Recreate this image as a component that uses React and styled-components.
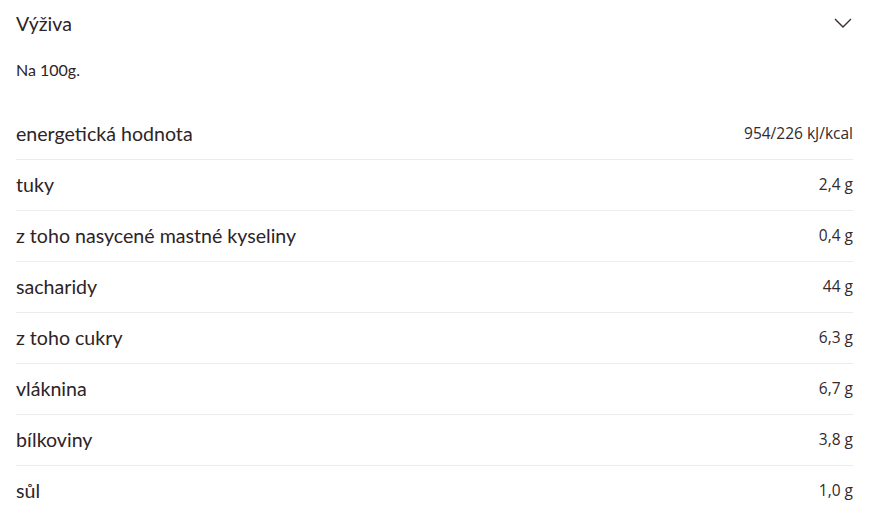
import React from 'react'
import styled, { createGlobalStyle } from 'styled-components'

const rows = [
  ['energetická hodnota', '954/226 kJ/kcal'],
  ['tuky', '2,4 g'],
  ['z toho nasycené mastné kyseliny', '0,4 g'],
  ['sacharidy', '44 g'],
  ['z toho cukry', '6,3 g'],
  ['vláknina', '6,7 g'],
  ['bílkoviny', '3,8 g'],
  ['sůl', '1,0 g'],
]

export default function App() {
  return (
    <>
      <GlobalStyle />
      <Panel>
        <Header>
          <Title>Výživa</Title>
          <Chevron viewBox="0 0 18 10" aria-hidden="true">
            <path d="M1 1l8 8 8-8" fill="none" stroke="#3a2d31" strokeWidth="1.4" />
          </Chevron>
        </Header>
        <Note>Na 100g.</Note>
        <Table>
          {rows.map(([label, value]) => (
            <Row key={label}>
              <Label>{label}</Label>
              <Value>{value}</Value>
            </Row>
          ))}
        </Table>
      </Panel>
    </>
  )
}

const GlobalStyle = createGlobalStyle`
  body {
    margin: 0;
    background: #fff;
    font-family: Lato, "Open Sans", sans-serif;
    color: #2e2327;
  }
`

const Panel = styled.div`
  padding: 0 21px 0 16px;
`

const Header = styled.div`
  display: flex;
  align-items: center;
  justify-content: space-between;
  height: 46px;
`

const Title = styled.h2`
  margin: 0;
  font-size: 19.5px;
  font-weight: 400;
`

const Chevron = styled.svg`
  width: 18px;
  height: 10px;
  margin-right: 1px;
  margin-top: -1px;
`

const Note = styled.div`
  font-size: 16px;
  line-height: 20px;
  margin-top: 14px;
`

const Table = styled.div`
  margin-top: 29px;
  display: flex;
  flex-direction: column;
`

const Row = styled.div`
  display: flex;
  align-items: center;
  justify-content: space-between;
  height: 50px;
  border-bottom: 1px solid #ececec;

  &:last-child {
    border-bottom: none;
  }
`

const Label = styled.span`
  font-size: 19.6px;
  margin-top: -2px;
`

const Value = styled.span`
  font-size: 15.5px;
  font-family: "Open Sans", Lato, sans-serif;
  color: #322a2d;
  margin-top: -2px;
`
